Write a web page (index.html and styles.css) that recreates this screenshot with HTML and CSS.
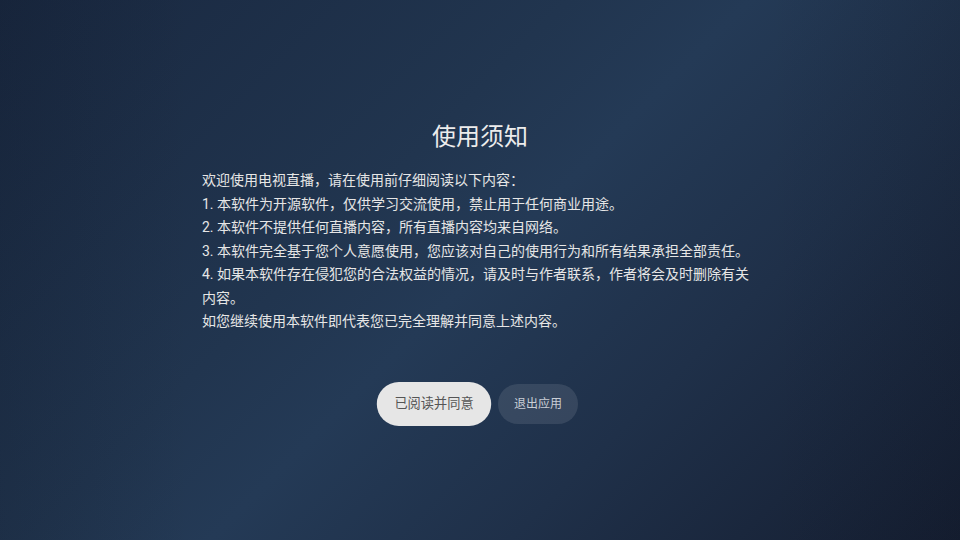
FILE: index.html
```html
<!DOCTYPE html>
<html lang="zh-CN">
<head>
<meta charset="utf-8">
<title>使用须知</title>
<link rel="stylesheet" href="styles.css">
</head>
<body>
<main class="screen">
  <h1 class="title">使用须知</h1>
  <div class="notice">
    <p>欢迎使用电视直播，请在使用前仔细阅读以下内容：</p>
    <p>1. 本软件为开源软件，仅供学习交流使用，禁止用于任何商业用途。</p>
    <p>2. 本软件不提供任何直播内容，所有直播内容均来自网络。</p>
    <p>3. 本软件完全基于您个人意愿使用，您应该对自己的使用行为和所有结果承担全部责任。</p>
    <p>4. 如果本软件存在侵犯您的合法权益的情况，请及时与作者联系，作者将会及时删除有关内容。</p>
    <p>如您继续使用本软件即代表您已完全理解并同意上述内容。</p>
  </div>
  <div class="actions">
    <button class="btn btn-primary">已阅读并同意</button>
    <button class="btn btn-secondary">退出应用</button>
  </div>
</main>
</body>
</html>
```
FILE: styles.css
```css
html, body {
  margin: 0;
  padding: 0;
  width: 960px;
  height: 540px;
  overflow: hidden;
}
body {
  font-family: Roboto, "Noto Sans CJK SC", sans-serif;
  background:
    linear-gradient(90deg, rgba(10,16,28,0.15) 0%, rgba(10,16,28,0) 20%, rgba(10,16,28,0) 80%, rgba(10,16,28,0.12) 100%),
    linear-gradient(135deg, #192840 0%, #21354f 38%, #243a56 50%, #1f3049 70%, #151e31 100%);
  color: #e6e6e6;
}
.screen {
  box-sizing: border-box;
  height: 540px;
  padding-top: 121px;
  display: flex;
  flex-direction: column;
  align-items: center;
}
.title {
  margin: 0;
  font-size: 24px;
  line-height: 32px;
  font-weight: 400;
  color: #ececec;
}
.notice {
  width: 556px;
  margin-top: 16px;
  font-size: 14px;
  line-height: 23.5px;
  color: #e6e6e6;
}
.notice p {
  margin: 0;
}
.actions {
  margin-top: 50px;
  display: flex;
  align-items: center;
  gap: 12px;
}
.btn {
  height: 40px;
  padding: 0 16px;
  border: none;
  border-radius: 20px;
  font-family: Roboto, "Noto Sans CJK SC", sans-serif;
  font-size: 12px;
  line-height: 40px;
}
.btn-primary {
  background: #e6e6e6;
  color: #555555;
  transform: scale(1.1);
}
.btn-secondary {
  background: rgba(255,255,255,0.1);
  color: #c9ced6;
}
```
